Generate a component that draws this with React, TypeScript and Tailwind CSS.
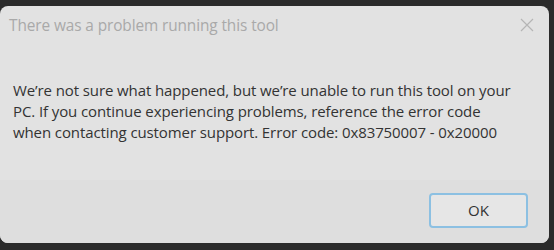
const LINES = [
  "We\u2019re not sure what happened, but we\u2019re unable to run this tool on your",
  "PC. If you continue experiencing problems, reference the error code",
  "when contacting customer support. Error code: 0x83750007 - 0x20000",
];

export default function App() {
  return (
    <div className="w-[554px] h-[250px] bg-[#2b2b2b] pt-[6px] overflow-hidden font-['Open_Sans',sans-serif]">
      <div className="w-[549px] h-[237px] bg-[#e2e2e2] rounded-[8px] flex flex-col overflow-hidden">
        <div className="h-[40px] flex items-center justify-between pl-[9px] pr-[15px]">
          <div className="text-[15.4px] text-[#a9a9a9] tracking-[-0.1px]">There was a problem running this tool</div>
          <svg width="14" height="14" viewBox="0 0 14 14" className="mt-[-2px]">
            <path d="M1 1 L13 13 M13 1 L1 13" stroke="#b5b5b5" strokeWidth="1.2" />
          </svg>
        </div>
        <div className="h-[134px] pt-[34px] pl-[13px] text-[15px] leading-[21px] text-[#333333] tracking-[-0.1px]">
          {LINES.map((l, i) => (
            <div key={i}>{l}</div>
          ))}
        </div>
        <div className="flex-1 bg-[#dedede] flex justify-end items-start pt-[13px] pr-[21px]">
          <button className="w-[99px] h-[35px] rounded-[4px] border-2 border-[#8cc0e2] bg-[#e6e6e6] text-[15px] text-[#333333]">
            OK
          </button>
        </div>
      </div>
    </div>
  );
}
